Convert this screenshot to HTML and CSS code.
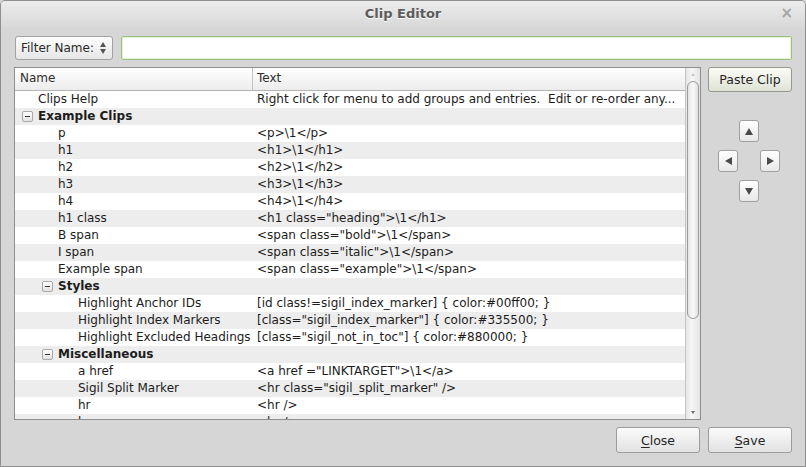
FILE: index.html
```html
<!DOCTYPE html>
<html>
<head>
<meta charset="utf-8">
<title>Clip Editor</title>
<link rel="stylesheet" href="styles.css">
</head>
<body>
<div class="window">
  <div class="titlebar">
    <span class="title">Clip Editor</span>
    <span class="close">×</span>
  </div>
  <div class="body">
    <div class="filter-row">
      <div class="combo">
        <span class="combo-label">Filter Name:</span>
        <span class="spin"><span class="spin-up"></span><span class="spin-down"></span></span>
      </div>
      <div class="filter-input"></div>
    </div>
    <div class="main">
      <div class="tree">
        <div class="tree-view">
          <div class="header">
            <div class="hcol hname">Name</div>
            <div class="hcol htext">Text</div>
          </div>
          <div class="rows">
            <div class="row"><div class="cname l0">Clips Help</div><div class="ctext">Right click for menu to add groups and entries.&nbsp; Edit or re-order any...</div></div>
            <div class="row alt group"><div class="cname g0"><span class="exp"></span>Example Clips</div><div class="ctext"></div></div>
            <div class="row"><div class="cname l1">p</div><div class="ctext">&lt;p&gt;\1&lt;/p&gt;</div></div>
            <div class="row alt"><div class="cname l1">h1</div><div class="ctext">&lt;h1&gt;\1&lt;/h1&gt;</div></div>
            <div class="row"><div class="cname l1">h2</div><div class="ctext">&lt;h2&gt;\1&lt;/h2&gt;</div></div>
            <div class="row alt"><div class="cname l1">h3</div><div class="ctext">&lt;h3&gt;\1&lt;/h3&gt;</div></div>
            <div class="row"><div class="cname l1">h4</div><div class="ctext">&lt;h4&gt;\1&lt;/h4&gt;</div></div>
            <div class="row alt"><div class="cname l1">h1 class</div><div class="ctext">&lt;h1 class="heading"&gt;\1&lt;/h1&gt;</div></div>
            <div class="row"><div class="cname l1">B span</div><div class="ctext">&lt;span class="bold"&gt;\1&lt;/span&gt;</div></div>
            <div class="row alt"><div class="cname l1">I span</div><div class="ctext">&lt;span class="italic"&gt;\1&lt;/span&gt;</div></div>
            <div class="row"><div class="cname l1">Example span</div><div class="ctext">&lt;span class="example"&gt;\1&lt;/span&gt;</div></div>
            <div class="row alt group"><div class="cname g1"><span class="exp"></span>Styles</div><div class="ctext"></div></div>
            <div class="row"><div class="cname l2">Highlight Anchor IDs</div><div class="ctext">[id class!=sigil_index_marker] { color:#00ff00; }</div></div>
            <div class="row alt"><div class="cname l2">Highlight Index Markers</div><div class="ctext">[class="sigil_index_marker"] { color:#335500; }</div></div>
            <div class="row"><div class="cname l2">Highlight Excluded Headings</div><div class="ctext">[class="sigil_not_in_toc"] { color:#880000; }</div></div>
            <div class="row alt group"><div class="cname g1"><span class="exp"></span>Miscellaneous</div><div class="ctext"></div></div>
            <div class="row"><div class="cname l2">a href</div><div class="ctext">&lt;a href ="LINKTARGET"&gt;\1&lt;/a&gt;</div></div>
            <div class="row alt"><div class="cname l2">Sigil Split Marker</div><div class="ctext">&lt;hr class="sigil_split_marker" /&gt;</div></div>
            <div class="row"><div class="cname l2">hr</div><div class="ctext">&lt;hr /&gt;</div></div>
            <div class="row alt"><div class="cname l2">br</div><div class="ctext">&lt;br /&gt;</div></div>
          </div>
        </div>
        <div class="scrollbar">
          <div class="sb-arrow sb-up"></div>
          <div class="sb-thumb"></div>
          <div class="sb-arrow sb-down"></div>
        </div>
      </div>
      <div class="side">
        <div class="btn paste">Paste Clip</div>
        <div class="arrows">
          <div class="arrow-row"><div class="abtn"><span class="tri tri-up"></span></div></div>
          <div class="arrow-row"><div class="abtn"><span class="tri tri-left"></span></div><div class="abtn"><span class="tri tri-right"></span></div></div>
          <div class="arrow-row"><div class="abtn"><span class="tri tri-down"></span></div></div>
        </div>
      </div>
    </div>
    <div class="bottom">
      <div class="btn"><u>C</u>lose</div>
      <div class="btn"><u>S</u>ave</div>
    </div>
  </div>
</div>
</body>
</html>
```

FILE: styles.css
```css
html, body {
  margin: 0;
  padding: 0;
  width: 806px;
  height: 467px;
  overflow: hidden;
  background: #d6d6d6;
  font-family: "DejaVu Sans", sans-serif;
  font-size: 12px;
  color: #1c1c1c;
}

.window {
  box-sizing: border-box;
  width: 806px;
  height: 467px;
  border: 1px solid #8e8e8e;
  border-radius: 5px 5px 0 0;
  background: #d6d6d6;
  display: flex;
  flex-direction: column;
  overflow: hidden;
}

.titlebar {
  height: 27px;
  flex: none;
  position: relative;
  display: flex;
  align-items: center;
  justify-content: center;
  background: linear-gradient(#ececec, #d8d8d8);
}

.title {
  font-weight: bold;
  font-size: 13px;
  color: #5c5c5c;
  text-shadow: 0 1px 0 #ffffff;
  margin-top: -3px;
}

.close {
  position: absolute;
  right: 12px;
  top: 3px;
  font-size: 15px;
  color: #a4a4a4;
  font-weight: bold;
}

.body {
  flex: 1;
  display: flex;
  flex-direction: column;
  padding: 8px 13px 0 13px;
}

.filter-row {
  height: 24px;
  display: flex;
  gap: 8px;
  padding-left: 1px;
}

.combo {
  box-sizing: border-box;
  width: 98px;
  height: 24px;
  border: 1px solid #a2a2a2;
  border-radius: 3px;
  background: linear-gradient(#fdfdfd, #e6e6e6);
  display: flex;
  align-items: center;
  padding-left: 5px;
  color: #2a2a2a;
}

.combo-label {
  flex: 1;
}

.spin {
  display: flex;
  flex-direction: column;
  gap: 2px;
  margin-right: 6px;
}

.spin-up, .spin-down {
  width: 0;
  height: 0;
  border-left: 3px solid transparent;
  border-right: 3px solid transparent;
}

.spin-up {
  border-bottom: 5px solid #555;
}

.spin-down {
  border-top: 5px solid #555;
}

.filter-input {
  box-sizing: border-box;
  flex: 1;
  height: 24px;
  border: 1px solid #98c27a;
  border-radius: 2px;
  background: #ffffff;
  box-shadow: inset 0 0 0 1px #e6f1dc;
}

.main {
  margin-top: 7px;
  height: 353px;
  display: flex;
  gap: 7px;
}

.tree {
  box-sizing: border-box;
  width: 687px;
  height: 353px;
  border: 1px solid #8f8f8f;
  background: #ffffff;
  display: flex;
}

.tree-view {
  flex: 1;
  display: flex;
  flex-direction: column;
  overflow: hidden;
}

.header {
  height: 23px;
  flex: none;
  display: flex;
  box-sizing: border-box;
  border-bottom: 1px solid #b4b4b4;
  background: linear-gradient(#ffffff, #ececec);
  color: #2e2e2e;
}

.hcol {
  line-height: 21px;
}

.hname {
  box-sizing: border-box;
  width: 238px;
  padding-left: 5px;
  border-right: 1px solid #c2c2c2;
}

.htext {
  padding-left: 4px;
}

.rows {
  flex: 1;
  overflow: hidden;
}

.row {
  height: 17px;
  line-height: 17px;
  display: flex;
  white-space: nowrap;
  background: #ffffff;
}

.row.alt {
  background: #ededed;
}

.cname {
  box-sizing: border-box;
  width: 238px;
  flex: none;
  display: flex;
  align-items: center;
}

.ctext {
  padding-left: 4px;
  overflow: hidden;
}

.l0 { padding-left: 23px; }
.l1 { padding-left: 43px; }
.l2 { padding-left: 63px; }
.g0 { padding-left: 7px; }
.g1 { padding-left: 27px; }

.group .cname {
  font-weight: bold;
}

.exp {
  box-sizing: border-box;
  width: 11px;
  height: 11px;
  margin-right: 5px;
  border: 1px solid #a8a8a8;
  border-radius: 2px;
  background: linear-gradient(#ffffff, #e2e2e2);
  position: relative;
}

.exp::after {
  content: "";
  position: absolute;
  left: 2px;
  top: 4px;
  width: 5px;
  height: 1px;
  background: #333;
}

.scrollbar {
  box-sizing: border-box;
  width: 15px;
  flex: none;
  border-left: 1px solid #c4c4c4;
  background: linear-gradient(90deg, #e6e6e6, #f6f6f6 40%, #e4e4e4);
  display: flex;
  flex-direction: column;
  align-items: center;
}

.sb-arrow {
  width: 0;
  height: 0;
  border-left: 2px solid transparent;
  border-right: 2px solid transparent;
}

.sb-up {
  margin-top: 5px;
  border-bottom: 3px solid #c8c8c8;
}

.sb-down {
  margin-top: auto;
  margin-bottom: 5px;
  border-top: 3px solid #6a6a6a;
}

.sb-thumb {
  box-sizing: border-box;
  width: 12px;
  height: 238px;
  margin-top: 5px;
  border: 1px solid #9c9c9c;
  border-radius: 6px;
  background: linear-gradient(90deg, #e4e4e4, #fafafa 50%, #e0e0e0);
}

.side {
  width: 84px;
  display: flex;
  flex-direction: column;
}

.btn {
  box-sizing: border-box;
  width: 84px;
  height: 26px;
  border: 1px solid #9c9c9c;
  border-radius: 3px;
  background: linear-gradient(#fbfbfb, #e2e2e2);
  display: flex;
  align-items: center;
  justify-content: center;
  color: #262626;
  font-size: 12.5px;
}

.btn u {
  text-decoration-thickness: 1px;
  text-underline-offset: 2px;
}

.paste {
  height: 25px;
  background: linear-gradient(#fbfcf7, #dfe3d6);
  border-color: #949a8c;
}

.arrows {
  margin-top: 28px;
  margin-right: 2px;
  display: flex;
  flex-direction: column;
  align-items: center;
  gap: 8px;
}

.arrow-row {
  display: flex;
  gap: 22px;
}

.abtn {
  box-sizing: border-box;
  width: 20px;
  height: 22px;
  border: 1px solid #a0a0a0;
  border-radius: 3px;
  background: linear-gradient(#ffffff, #e8e8e8);
  display: flex;
  align-items: center;
  justify-content: center;
}

.tri {
  width: 0;
  height: 0;
}

.tri-up {
  border-left: 4px solid transparent;
  border-right: 4px solid transparent;
  border-bottom: 7px solid #4a4a4a;
}

.tri-down {
  border-left: 4px solid transparent;
  border-right: 4px solid transparent;
  border-top: 7px solid #4a4a4a;
}

.tri-left {
  border-top: 4px solid transparent;
  border-bottom: 4px solid transparent;
  border-right: 7px solid #4a4a4a;
}

.tri-right {
  border-top: 4px solid transparent;
  border-bottom: 4px solid transparent;
  border-left: 7px solid #4a4a4a;
}

.bottom {
  margin-top: 7px;
  display: flex;
  justify-content: flex-end;
  gap: 8px;
}
```
